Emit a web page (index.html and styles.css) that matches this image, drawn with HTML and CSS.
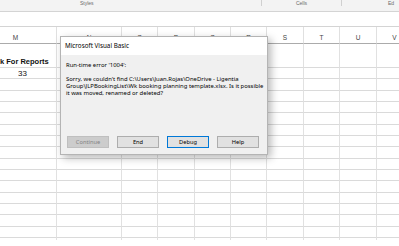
FILE: index.html
```html
<!DOCTYPE html>
<html>
<head>
<meta charset="utf-8">
<link rel="stylesheet" href="styles.css">
</head>
<body>
<div class="ribbon">
  <div class="group g1"><span class="glabel">Styles</span></div>
  <div class="group g2"><span class="glabel">Cells</span></div>
  <div class="group g3"><span class="glabel">Ed</span></div>
</div>
<div class="formula"></div>
<div class="sheetwrap">
  <div class="sheet" id="sheet">
    <div class="hd">M</div><div class="hd">N</div><div class="hd">O</div><div class="hd">P</div><div class="hd">Q</div><div class="hd">R</div><div class="hd">S</div><div class="hd">T</div><div class="hd">U</div><div class="hd">V</div>
    <div class="c tall"><span class="bold">k For Reports</span></div><div class="c tall"></div><div class="c tall"></div><div class="c tall"></div><div class="c tall"></div><div class="c tall"></div><div class="c tall"></div><div class="c tall"></div><div class="c tall"></div><div class="c tall"></div>
    <div class="c"><span class="num">33</span></div><div class="c"></div><div class="c"></div><div class="c"></div><div class="c"></div><div class="c"></div><div class="c"></div><div class="c"></div><div class="c"></div><div class="c"></div>
  </div>
</div>
<div class="dialog">
  <div class="dtitle">Microsoft Visual Basic</div>
  <div class="dbody">
    <div class="err">Run-time error '1004':</div>
    <div class="msg">Sorry, we couldn't find C:\Users\Juan.Rojas\OneDrive - Ligentia<br>Group\JLPBookingList\Wk booking planning template.xlsx. Is it possible<br>it was moved, renamed or deleted?</div>
    <div class="btns">
      <div class="btn disabled">Continue</div>
      <div class="btn">End</div>
      <div class="btn focus">Debug</div>
      <div class="btn">Help</div>
    </div>
  </div>
</div>
<script src="script.js"></script>
</body>
</html>
```
FILE: script.js
```js
var s = document.getElementById('sheet');
for (var r = 0; r < 15; r++) {
  for (var c = 0; c < 10; c++) {
    var d = document.createElement('div');
    d.className = 'c';
    s.appendChild(d);
  }
}
```
FILE: styles.css
```css
html, body {
  margin: 0;
  padding: 0;
}
body {
  width: 399px;
  height: 246px;
  overflow: hidden;
  background: #ffffff;
  font-family: "Liberation Sans", Arial, sans-serif;
  position: relative;
}
.ribbon {
  height: 12px;
  box-sizing: border-box;
  background: #f3f3f3;
  border-bottom: 1px solid #d4d4d4;
  display: flex;
  overflow: hidden;
}
.group {
  height: 6px;
  box-sizing: border-box;
  font-size: 5px;
  color: #6a6a6a;
  line-height: 6px;
}
.glabel {
  display: block;
}
.g1 {
  width: 262px;
  padding-left: 80px;
  border-right: 1px solid #d0d0d0;
}
.g2 {
  width: 80px;
  text-align: center;
  border-right: 1px solid #d0d0d0;
}
.g3 {
  padding-left: 46px;
}
.formula {
  height: 15px;
  box-sizing: border-box;
  background: #ffffff;
  border-bottom: 1px solid #d4d4d4;
}
.sheetwrap {
  height: 213px;
  overflow: hidden;
}
.sheet {
  margin-left: -25px;
  display: grid;
  grid-template-columns: 82px 65px 36px 37px 36px 36px 37px 36px 37px 36px;
  grid-auto-rows: 11.33px;
  grid-template-rows: 17px 24px;
  width: 438px;
}
.hd {
  box-sizing: border-box;
  border-right: 1px solid #e0e0e0;
  border-bottom: 1px solid #ababab;
  font-size: 6.5px;
  color: #444;
  text-align: center;
  padding-top: 7px;
  line-height: 7px;
}
.c {
  box-sizing: border-box;
  border-right: 1px solid #e1e1e1;
  border-bottom: 1px solid #dadada;
  font-size: 8px;
  line-height: 9px;
  display: flex;
  align-items: flex-end;
  white-space: nowrap;
}
.bold {
  font-weight: bold;
  padding-left: 25px;
  padding-bottom: 1px;
  font-size: 7.5px;
  color: #111;
}
.num {
  padding-left: 43px;
  color: #111;
}
.dialog {
  position: absolute;
  left: 60px;
  top: 36px;
  width: 208px;
  height: 119px;
  box-sizing: border-box;
  border: 1px solid #b4b4b4;
  background: #f0f0f0;
  box-shadow: 3px 3px 8px rgba(0, 0, 0, 0.28);
  display: flex;
  flex-direction: column;
  font-family: "Noto Sans", "Liberation Sans", sans-serif;
  color: #000;
}
.dtitle {
  height: 18px;
  background: #ffffff;
  font-size: 6.3px;
  line-height: 18px;
  padding-left: 4px;
}
.dbody {
  flex: 1;
  display: flex;
  flex-direction: column;
  padding: 7px 4px 6px 5px;
  font-size: 5.9px;
  line-height: 7px;
}
.err {
  margin-bottom: 7px;
}
.msg {
  white-space: nowrap;
}
.btns {
  margin-top: auto;
  display: flex;
  gap: 8px;
  padding-left: 1px;
}
.btn {
  width: 42px;
  height: 12px;
  box-sizing: border-box;
  background: #e1e1e1;
  border: 1px solid #adadad;
  text-align: center;
  font-size: 5.7px;
  line-height: 10px;
}
.btn.disabled {
  background: #cccccc;
  border-color: #bfbfbf;
  color: #838383;
}
.btn.focus {
  border-color: #0078d7;
}
```
